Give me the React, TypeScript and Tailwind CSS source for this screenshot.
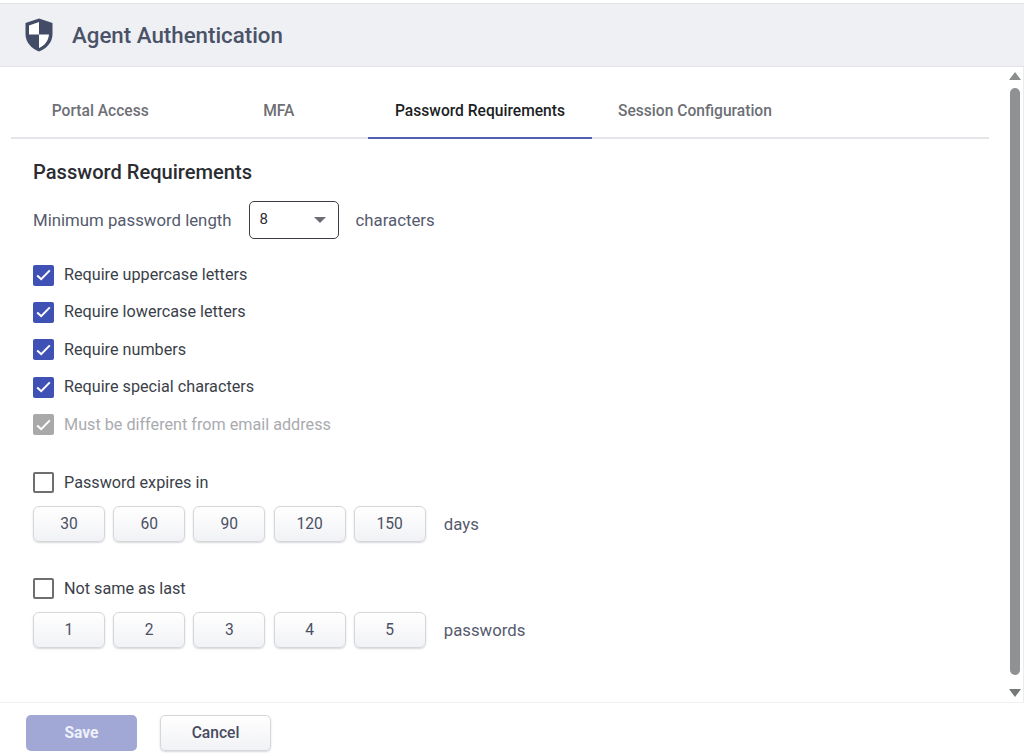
const checks = [
  { label: "Require uppercase letters" },
  { label: "Require lowercase letters" },
  { label: "Require numbers" },
  { label: "Require special characters" },
  { label: "Must be different from email address", disabled: true },
];

const expiryDays = ["30", "60", "90", "120", "150"];
const lastPasswords = ["1", "2", "3", "4", "5"];

function ShieldIcon() {
  return (
    <svg width="28" height="34" viewBox="0 0 28 34">
      <path d="M14 0.5 L27.5 5 V16 C27.5 24.5 21.5 30.5 14 33.5 C6.5 30.5 0.5 24.5 0.5 16 V5 Z" fill="#434c67" />
      <path d="M14 4 L4 7.4 V16.5 H14 Z" fill="#fff" />
      <path d="M14 16.5 H24 C23.4 23 19.5 27.6 14 30 Z" fill="#fff" />
    </svg>
  );
}

function Checkbox({ checked, disabled, label }: { checked: boolean; disabled?: boolean; label: string }) {
  return (
    <label className="flex h-[21px] items-center gap-[10px]">
      {checked ? (
        <span className={`flex size-[21px] items-center justify-center rounded-[2px] ${disabled ? "bg-[#a9a9a9]" : "bg-[#3f51b5]"}`}>
          <svg width="15" height="12" viewBox="0 0 15 12" fill="none">
            <path d="M1.2 6.4 L5.2 10.2 L13.8 1.4" stroke="#fff" strokeWidth="2" />
          </svg>
        </span>
      ) : (
        <span className="size-[21px] rounded-[2px] border-2 border-[#6f6f6f] bg-white" />
      )}
      <span className={`text-[16.2px] leading-[20px] ${disabled ? "text-[#a9abb0]" : "text-[#3b3f4a]"}`}>{label}</span>
    </label>
  );
}

function OptionRow({ options, unit }: { options: string[]; unit: string }) {
  return (
    <div className="flex items-center">
      <div className="flex gap-[8.2px]">
        {options.map((item) => (
          <button
            key={item}
            className="h-[36px] w-[72px] rounded-[6px] border border-[#d5d7dc] bg-gradient-to-b from-white to-[#f1f2f5] pt-[2px] text-[15.6px] text-[#4a5065] shadow-[0_1px_2px_rgba(0,0,0,0.16)]"
          >
            {item}
          </button>
        ))}
      </div>
      <span className="ml-[18px] pt-[2px] text-[16.8px] text-[#555a6e]">{unit}</span>
    </div>
  );
}

export default function App() {
  return (
    <div className="flex h-[756px] w-[1024px] flex-col overflow-hidden bg-white pt-[3px] font-['Roboto',sans-serif]">
      <header className="flex h-[64px] shrink-0 items-center gap-[19px] border-y border-[#e2e3e6] bg-[#eef0f4] pl-[25px]">
        <ShieldIcon />
        <h1 className="pt-[2px] text-[22.3px] font-medium text-[#4b5268]">Agent Authentication</h1>
      </header>

      <div className="flex min-h-0 flex-1 border-r border-[#ececec]">
        <main className="min-w-0 flex-1 pl-[11px] pr-[18px]">
          <nav className="flex h-[72px] border-b-2 border-[#e4e5e8] text-[15.6px] font-medium">
            <div className="flex w-[178.5px] items-center justify-center pt-[19px] text-[#6d6f75]">Portal Access</div>
            <div className="flex w-[178.5px] items-center justify-center pt-[19px] text-[#6d6f75]">MFA</div>
            <div className="-mb-[2px] flex w-[224px] items-center justify-center border-b-2 border-[#4f5fb5] pt-[19px] text-[#1c1e24]">Password Requirements</div>
            <div className="flex items-center pl-[26px] pt-[19px] text-[#6d6f75]">Session Configuration</div>
          </nav>

          <section className="pl-[22px]">
            <h2 className="mt-[19px] text-[20.1px] leading-[28px] font-medium text-[#2b2d33]">Password Requirements</h2>

            <div className="mt-[15px] flex items-center text-[16.8px] text-[#555a6e]">
              <span className="pt-[1px]">Minimum password length</span>
              <div className="ml-[17px] flex h-[38px] w-[90px] items-center justify-between rounded-[5px] border border-[#3a3d45] pb-[1px] pl-[10px] pr-[12px] text-[15px] text-[#2b2d33]">
                <span>8</span>
                <span className="border-x-[6px] border-t-[6px] border-x-transparent border-t-[#6b6e75]" />
              </div>
              <span className="ml-[17px] pt-[1px]">characters</span>
            </div>

            <div className="mt-[25.5px] flex flex-col gap-[16.4px]">
              {checks.map((item) => (
                <Checkbox key={item.label} checked disabled={item.disabled} label={item.label} />
              ))}
            </div>

            <div className="mt-[37px]">
              <Checkbox checked={false} label="Password expires in" />
            </div>
            <div className="mt-[13px]">
              <OptionRow options={expiryDays} unit="days" />
            </div>

            <div className="mt-[36px]">
              <Checkbox checked={false} label="Not same as last" />
            </div>
            <div className="mt-[13px]">
              <OptionRow options={lastPasswords} unit="passwords" />
            </div>
          </section>
        </main>

        {/* scrollbar */}
        <div className="flex w-[16px] shrink-0 flex-col items-center pt-[5px]">
          <span className="border-x-[6px] border-b-[8px] border-x-transparent border-b-[#8b8d8f]" />
          <span className="mt-[8px] h-[587px] w-[10px] rounded-full bg-[#8f9192]" />
          <span className="mt-[14px] border-x-[6px] border-t-[8px] border-x-transparent border-t-[#767879]" />
        </div>
      </div>

      <footer className="flex h-[54px] shrink-0 items-start gap-[23px] border-t border-[#f0f0f2] pl-[26px] pt-[12px]">
        <button className="h-[36px] w-[111px] rounded-[5px] bg-[#a2a8d6] pt-[1px] text-[15.6px] font-bold text-[#eef0fa]">Save</button>
        <button className="h-[36px] w-[111px] rounded-[5px] border border-[#d5d7dc] bg-gradient-to-b from-white to-[#f1f2f5] pt-[1px] text-[15.6px] font-medium text-[#474c5e] shadow-[0_1px_2px_rgba(0,0,0,0.16)]">Cancel</button>
      </footer>
    </div>
  );
}
